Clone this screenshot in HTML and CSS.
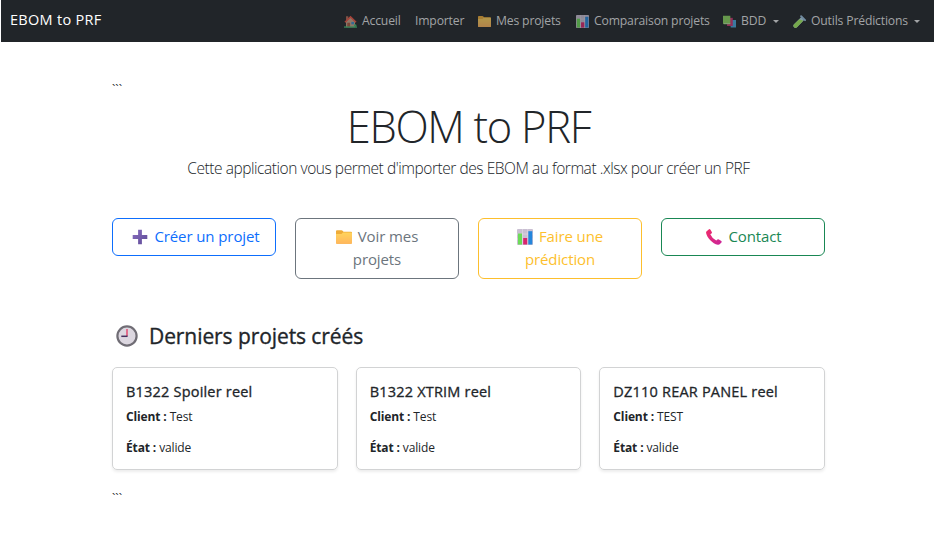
FILE: index.html
```html
<!DOCTYPE html>
<html lang="fr">
<head>
<meta charset="utf-8">
<title>EBOM to PRF</title>
<link rel="stylesheet" href="styles.css">
</head>
<body>
<svg class="defs" aria-hidden="true">
  <defs>
    <linearGradient id="gold" x1="0" y1="0" x2="0" y2="1"><stop offset="0" stop-color="#ffd45c"/><stop offset="1" stop-color="#ffb65c"/></linearGradient>
    <linearGradient id="violet" x1="0" y1="0" x2="1" y2="1"><stop offset="0" stop-color="#8a6fc0"/><stop offset="1" stop-color="#5d4a96"/></linearGradient>
    <linearGradient id="pink" x1="0" y1="0" x2="1" y2="1"><stop offset="0" stop-color="#f02a68"/><stop offset="1" stop-color="#c9259b"/></linearGradient>
    <symbol id="folder" viewBox="0 0 16 16"><path d="M0 2.200Q0 1.300 1 1.300h4.500q.7 0 1.100.5l.9 1H15q1 0 1 1v10q0 1-1 1H1q-1 0-1-1z" fill="#efac38"/><path d="M0 5h5.500l1.500-1.500H15q1 0 1 1v9.300q0 1-1 1H1q-1 0-1-1z" fill="url(#gold)"/></symbol>
    <symbol id="chart" viewBox="0 0 16 16"><rect width="16" height="16" rx="1" fill="#c9bfd2"/><path d="M0 5h16M0 10h16M5.500 0v16M10.700 0v16" stroke="#e3dce8" stroke-width=".6"/><rect x="1" y="4.500" width="4" height="11" fill="#6cdb57"/><rect x="6.200" y="9" width="4" height="6.500" fill="#d9246d"/><rect x="11.300" y="2.200" width="4" height="13.300" fill="#2486dc"/></symbol>
    <symbol id="house" viewBox="0 0 16 16"><path d="M2.500 7.500 8 2l5.500 5.500V15h-11z" fill="#c9a58a"/><path d="M2.500 1.500h2.800v4l-2.800 2.300z" fill="#b66a55"/><path d="M.5 8.400 8 .8l7.500 7.600-1.500 1L8 3.600 2 9.400z" fill="#ef5444"/><path d="M4 9.500h3.500V15H4z" fill="#a9593f"/><path d="M9 8.500h3.300v3H9z" fill="#3e8ecb"/><path d="M0 14h16v1.700H0z" fill="#41b873"/><circle cx="13.800" cy="13" r="1.600" fill="#41b873"/></symbol>
    <symbol id="books" viewBox="0 0 16 16"><path d="M8.500 6H16v9.500H9.500z" fill="#4aa8de"/><path d="M5 3.500h7v10H5z" fill="#d23575"/><path d="M0 1h9v10.500H1.200Q0 11.500 0 10.300z" fill="#8cd65f"/><path d="M1 10.500h8" stroke="#d7ead0" stroke-width=".7"/></symbol>
    <symbol id="tube" viewBox="0 0 16 16"><path d="m10.200 2.500 3.500 3.700-8.800 8.900a2.400 2.400 0 0 1-3.600-3.600z" fill="#b9d9ec"/><path d="m7.800 5.100 4.800 2.100-7.700 7.900a2.400 2.400 0 0 1-3.600-3.600z" fill="#a4f060"/><path d="m10 1.500 4.800 4.800" stroke="#9cc4e2" stroke-width="2.400" stroke-linecap="round"/></symbol>
    <symbol id="plus" viewBox="0 0 16 16"><path d="M6.100.8h3.800v5.300h5.400v3.800H9.900v5.400H6.100V9.900H.7V6.100h5.400z" fill="url(#violet)"/></symbol>
    <symbol id="phone" viewBox="0 0 16 16"><path d="M.4 2.500 2.700.4q.9-.7 1.600.2l1.500 2.300q.5.900-.3 1.500l-1.200.9q1.700 4.100 6 6.300l1.100-1.100q.7-.6 1.500-.1l2.400 1.700q.8.700.1 1.500l-1.700 1.700q-.7.600-1.900.4C6.500 14.500 1 8.800.1 3.900Q0 3 .4 2.500z" fill="url(#pink)"/></symbol>
    <symbol id="clock" viewBox="0 0 22 22"><circle cx="11" cy="11" r="9.600" fill="#dcd7e0" stroke="#706d75" stroke-width="2.200"/><path d="M11 3v1M11 18v1M3 11h1M18 11h1" stroke="#aaa4af"/><path d="M11 11V4" stroke="#e43561" stroke-width="1.300"/><path d="M11.600 11.300H5.300" stroke="#45305c" stroke-width="1.500"/></symbol>
  </defs>
</svg>
<nav class="navbar">
  <a class="brand">EBOM to PRF</a>
  <div class="menu">
    <a class="link home"><svg class="icon"><use href="#house"/></svg><span>Accueil</span></a>
    <a class="link import"><span>Importer</span></a>
    <a class="link mine"><svg class="icon"><use href="#folder"/></svg><span>Mes projets</span></a>
    <a class="link compare"><svg class="icon"><use href="#chart"/></svg><span>Comparaison projets</span></a>
    <a class="link bdd"><svg class="icon"><use href="#books"/></svg><span>BDD</span><i class="caret"></i></a>
    <a class="link tools"><svg class="icon"><use href="#tube"/></svg><span>Outils Prédictions</span><i class="caret"></i></a>
  </div>
</nav>
<main class="container">
  <div class="ticks">```</div>
  <header class="hero">
    <h1>EBOM to PRF</h1>
    <p>Cette application vous permet d'importer des EBOM au format .xlsx pour créer un PRF</p>
  </header>
  <div class="actions">
    <a class="btn primary"><svg class="icon"><use href="#plus"/></svg>Créer un projet</a>
    <a class="btn secondary"><svg class="icon"><use href="#folder"/></svg>Voir mes<br>projets</a>
    <a class="btn warning"><svg class="icon"><use href="#chart"/></svg>Faire une<br>prédiction</a>
    <a class="btn success"><svg class="icon"><use href="#phone"/></svg>Contact</a>
  </div>
  <h2><svg class="clock"><use href="#clock"/></svg><span>Derniers projets créés</span></h2>
  <div class="cards">
    <article class="card"><h3>B1322 Spoiler reel</h3><p><b>Client :</b> Test</p><p><b>État :</b> valide</p></article>
    <article class="card"><h3>B1322 XTRIM reel</h3><p><b>Client :</b> Test</p><p><b>État :</b> valide</p></article>
    <article class="card"><h3>DZ110 REAR PANEL reel</h3><p><b>Client :</b> TEST</p><p><b>État :</b> valide</p></article>
  </div>
  <div class="ticks end">```</div>
</main>
</body>
</html>
```
FILE: styles.css
```css
* { box-sizing: border-box; }
body { margin: 0; background: #fff; color: #212529; font-family: "Open Sans", "Noto Sans", sans-serif; font-size: 12px; overflow: hidden; }
.defs { position: absolute; width: 0; height: 0; }
h1, h2, h3, p { margin: 0; }
.navbar { height: 42px; margin-left: 1px; padding: 0 14px 0 9px; background: #212529; display: flex; align-items: center; justify-content: space-between; white-space: nowrap; }
.brand { color: #fff; font-size: 14.5px; letter-spacing: 0.3px; line-height: 20px; margin-top: -2px; }
.menu { display: flex; color: #a2a4a6; line-height: 20px; font-size: 12.2px; letter-spacing: -0.17px; }
.link { display: flex; align-items: center; }
.link .icon { width: 13px; height: 13px; margin-right: 5px; opacity: .65; flex: none; }
.home { width: 71px; }
.import { width: 63px; }
.mine { width: 98px; }
.compare { width: 147px; }
.bdd { width: 70px; }
.tools { width: 127px; }
.caret { border: 3.200px solid transparent; border-top-color: currentColor; border-bottom: 0; margin-left: auto; }
.bdd .caret { margin-right: 14px; }
.container { width: 713px; margin: 0 0 0 112px; }
.ticks { height: 20px; margin-top: 38px; line-height: 20px; font-size: 12px; }
.hero { text-align: center; }
.hero h1 { font-size: 43.500px; line-height: 54px; font-weight: 300; letter-spacing: -1.3px; }
.hero p { font-size: 15.500px; line-height: 24px; font-weight: 300; letter-spacing: -0.45px; margin-top: 2px; white-space: nowrap; }
.actions { display: grid; grid-template-columns: repeat(4, 164px); gap: 19px; align-items: start; margin-top: 38px; }
.btn { border: 1px solid; border-radius: 6px; text-align: center; padding: 6px 0 6px 4px; font-size: 15px; line-height: 23px; letter-spacing: -0.1px; white-space: nowrap; min-height: 38px; }
.btn .icon { width: 16px; height: 16px; margin-right: 6px; vertical-align: -2.500px; }
.btn.secondary, .btn.warning { padding-left: 0; height: 61px; }
.btn.success { padding-left: 2px; }
.primary { color: #0d6efd; }
.secondary { color: #6c757d; }
.warning { color: #fdbf2d; }
.success { color: #198754; }
h2 { display: flex; align-items: center; font-size: 21px; line-height: 28px; font-weight: 500; letter-spacing: -0.08px; margin: 43px 0 17px 4px; -webkit-text-stroke: 0.35px currentColor; }
.clock { width: 22px; height: 22px; margin-right: 11px; stroke-width: 0; }
.cards { display: grid; grid-template-columns: repeat(3, 1fr); gap: 18px; }
.card { height: 103px; border: 1px solid #d2d3d4; border-radius: 5px; padding: 13px; box-shadow: 0 2px 3px rgba(0,0,0,.075); white-space: nowrap; }
.card h3 { font-size: 14.500px; line-height: 20px; font-weight: 500; letter-spacing: 0.2px; margin-bottom: 5px; -webkit-text-stroke: 0.3px currentColor; }
.card p { font-size: 12px; line-height: 20px; letter-spacing: -0.13px; margin-bottom: 11px; }
.card b { font-weight: 700; }
.card:nth-child(n) { padding-top: 14px; }
.actions + h2 { margin-top: 43px; margin-bottom: 17px; }
.end { margin-top: 19px; }
```
